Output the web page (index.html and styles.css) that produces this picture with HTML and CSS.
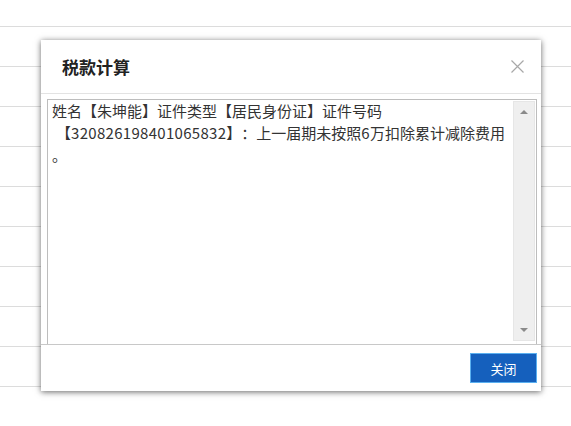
FILE: index.html
```html
<!DOCTYPE html>
<html lang="zh-CN">
<head>
  <meta charset="UTF-8" />
  <title>税款计算</title>
  <link rel="stylesheet" href="styles.css">
</head>
<body>
  <!-- list rows behind the dialog -->
  <div class="rows">
    <div class="row"></div>
    <div class="row"></div>
    <div class="row"></div>
    <div class="row"></div>
    <div class="row"></div>
    <div class="row"></div>
    <div class="row"></div>
    <div class="row"></div>
    <div class="row"></div>
  </div>

  <div class="dialog">
    <div class="dialog-header">
      <h2 class="dialog-title">税款计算</h2>
      <button class="dialog-close" title="关闭">
        <svg width="13" height="13" viewBox="0 0 13 13">
          <path d="M0.5 0.5 L12.5 12.5 M12.5 0.5 L0.5 12.5" stroke="#a8a8a8" stroke-width="1.2" fill="none"/>
        </svg>
      </button>
    </div>

    <div class="dialog-body">
      <div class="message-box">
        <div class="message-text">姓名【朱坤能】证件类型【居民身份证】证件号码<br><span class="lead">【</span><span class="num">320826198401065832</span>】：上一届期未按照<span class="num">6</span>万扣除累计减除费用<br>。</div>
        <div class="scrollbar">
          <div class="arrow arrow-up"></div>
          <div class="arrow arrow-down"></div>
        </div>
      </div>
    </div>

    <div class="dialog-footer">
      <button class="btn-primary">关闭</button>
    </div>
  </div>
</body>
</html>
```

FILE: styles.css
```css
body {
  margin: 0;
  background-color: white;
  font-family: "Noto Sans CJK SC", "Liberation Sans", sans-serif;
  color: #333;
}

.rows {
  margin-top: 26px;
  border-top: 1px solid #dcdcdc;
}

.row {
  height: 39px;
  border-bottom: 1px solid #dcdcdc;
}

.dialog {
  position: absolute;
  left: 41px;
  top: 40px;
  width: 500px;
  height: 351px;
  background-color: white;
  box-shadow: 0 1px 6px rgba(0, 0, 0, 0.6);
  display: flex;
  flex-direction: column;
}

.dialog-header {
  height: 53px;
  border-bottom: 1px solid #e3e3e3;
  display: flex;
  align-items: center;
  justify-content: space-between;
  padding: 0 17px 0 21px;
}

.dialog-title {
  margin: 0;
  font-size: 17px;
  font-weight: bold;
  color: #222;
}

.dialog-close {
  border: none;
  background: none;
  padding: 0;
  display: flex;
  cursor: pointer;
}

.dialog-body {
  padding: 5px 4px 0 6px;
}

.message-box {
  height: 244px;
  border: 1px solid #bdbdbd;
  border-bottom: none;
  display: flex;
}

.message-text {
  flex: 1;
  min-width: 0;
  padding: 0 4px;
  font-size: 15px;
  line-height: 22px;
  white-space: nowrap;
  overflow: hidden;
  text-spacing-trim: space-all;
}

.lead {
  padding-left: 4px;
}

.num {
  letter-spacing: 0.3px;
}

.scrollbar {
  width: 20px;
  flex-shrink: 0;
  margin: 1px 1px 3px 0;
  background-color: #efefef;
  border: 1px solid #e6e6e6;
  display: flex;
  flex-direction: column;
  justify-content: space-between;
  align-items: center;
  padding: 8px 0;
}

.arrow {
  width: 0;
  height: 0;
  border-left: 4px solid transparent;
  border-right: 4px solid transparent;
}

.arrow-up {
  border-bottom: 4px solid #8a8a8a;
}

.arrow-down {
  border-top: 4px solid #8a8a8a;
}

.dialog-footer {
  flex: 1;
  border-top: 1px solid #c8c8c8;
  display: flex;
  justify-content: flex-end;
  align-items: flex-start;
  padding: 8px 4px 0 0;
}

.btn-primary {
  width: 67px;
  height: 30px;
  background-color: #1560bd;
  border: 1px solid #5ab0f0;
  color: white;
  font-family: "Noto Sans CJK SC", sans-serif;
  font-size: 13px;
  cursor: pointer;
}
```
